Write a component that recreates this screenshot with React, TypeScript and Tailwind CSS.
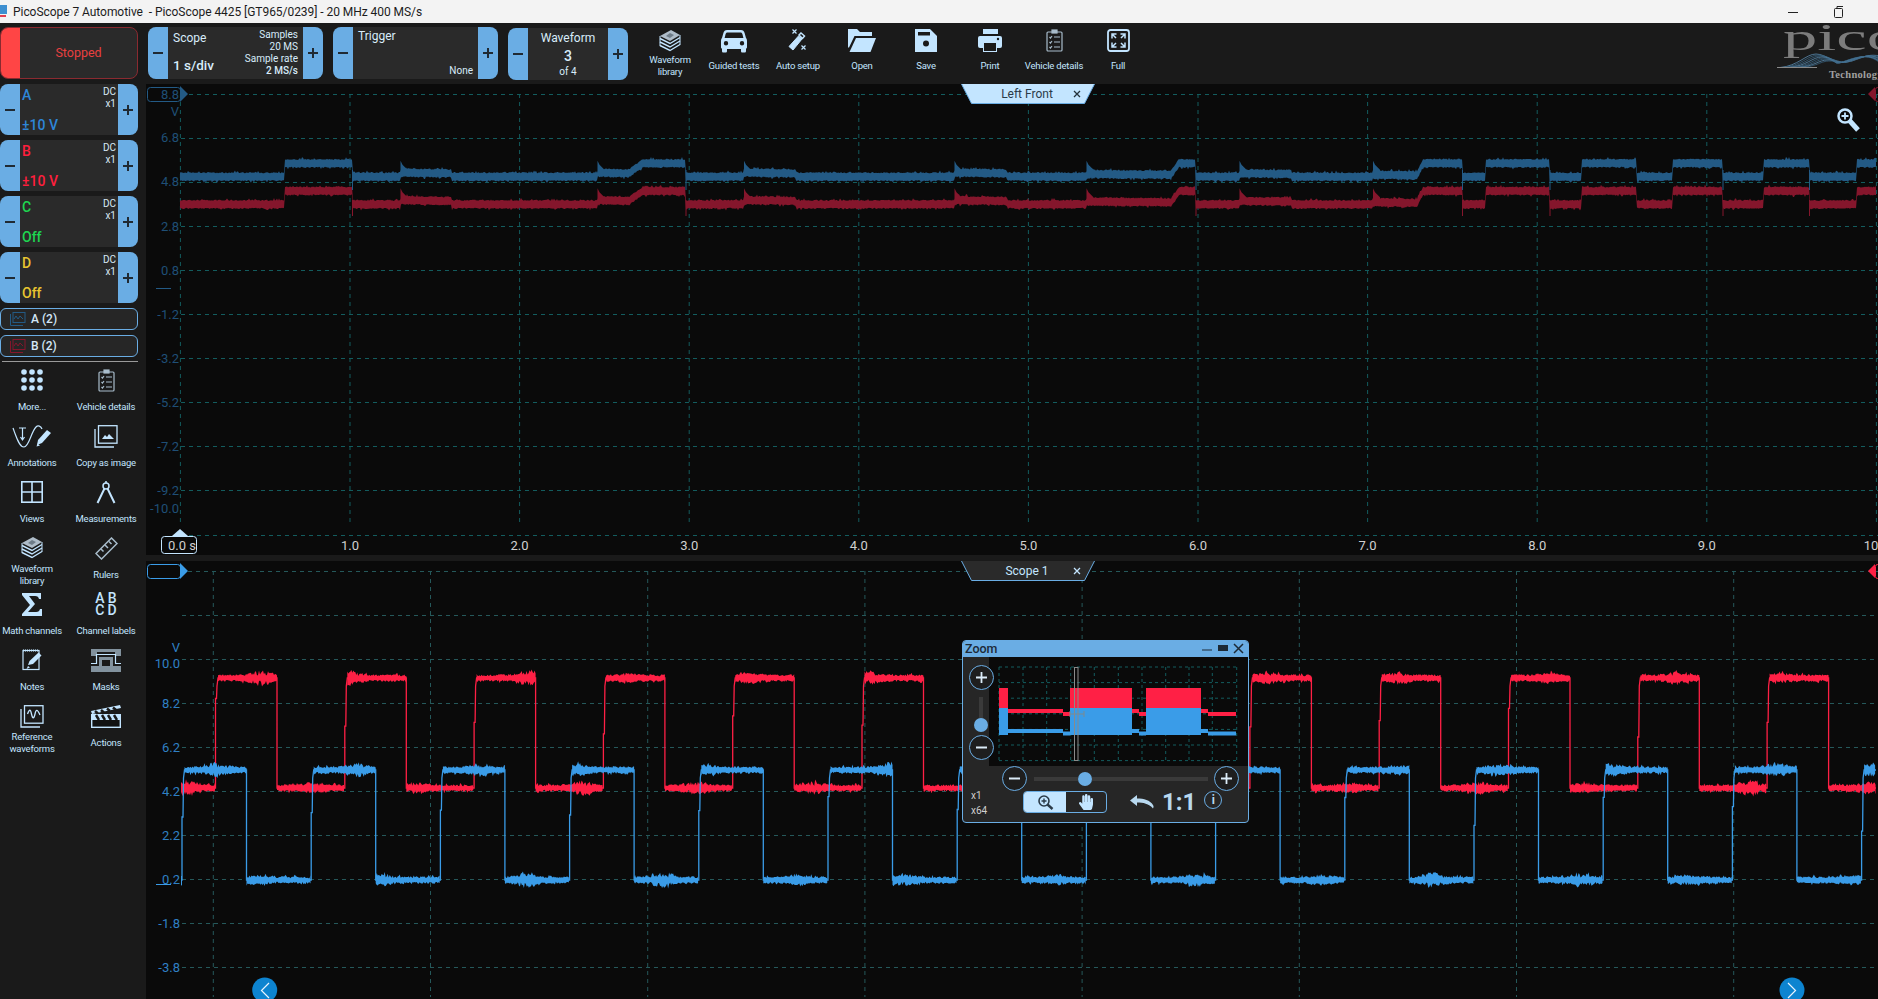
import type { ReactNode } from "react";
import { FaHandPaper } from "react-icons/fa";

const ICON = "#c3e5ff";
const PANEL = "#1a1a1a";

function rng(seed: number) {
  let s = seed;
  return () => {
    s = (s + 0x6d2b79f5) | 0;
    let t = Math.imul(s ^ (s >>> 15), 1 | s);
    t = (t + Math.imul(t ^ (t >>> 7), 61 | t)) ^ t;
    return ((t ^ (t >>> 14)) >>> 0) / 4294967296;
  };
}

/* top trace: x, offset (0 = low level, 1 = high level) */
const TOP_TRACE: [number, number][] = [
  [180, 0], [284, 0], [284.5, 1], [352, 1], [352.5, 0], [400, 0], [400.5, 0.3], [451, 0.25], [451.5, 0],
  [597, 0], [597.5, 0.3], [629, 0.25], [643, 1], [685.5, 1], [686, 0], [743.5, 0], [744, 0.3],
  [795, 0.25], [797, 0], [954, 0], [954.5, 0.3], [1006, 0.25], [1008, 0], [1086, 0], [1086.5, 0.2],
  [1171, 0.15], [1179, 1], [1195.5, 1], [1196, 0], [1239, 0], [1239.5, 0.25], [1291, 0.2], [1292, 0], [1372.5, 0],
  [1373, 0.15], [1417, 0.1], [1423, 1], [1462, 1], [1462.5, 0], [1485, 0], [1485.5, 1], [1549.5, 1], [1550, 0],
  [1581, 0], [1581.5, 1], [1636, 1], [1636.5, 0], [1672.5, 0], [1673, 1], [1722.5, 1], [1723, 0], [1763, 0], [1763.5, 1],
  [1809, 1], [1809.5, 0], [1856, 0], [1856.5, 1], [1876, 1],
];
const TOP_FALLS = [352.5, 686, 1196, 1462.5, 1550, 1723, 1809.5];
const TOP_SPIKES = [400.5, 597.5, 744, 954.5, 1086.5, 1239.5, 1373];

function levelAt(x: number) {
  for (let i = 1; i < TOP_TRACE.length; i++) {
    const [x0, y0] = TOP_TRACE[i - 1];
    const [x1, y1] = TOP_TRACE[i];
    if (x <= x1) return y0 + ((y1 - y0) * (x - x0)) / (x1 - x0);
  }
  return 0;
}

function topBand(baseY: number, seed: number) {
  const r = rng(seed);
  const up: string[] = [];
  const down: string[] = [];
  for (let x = 180; x <= 1876; x++) {
    const y = baseY - levelAt(x) * 13.4;
    const a = 3.4 + r() * 1.3 + (r() > 0.93 ? 1.6 : 0);
    const b = 3.4 + r() * 1.3 + (r() > 0.93 ? 1.6 : 0);
    up.push(`${x} ${(y - a).toFixed(1)}`);
    down.unshift(`${x} ${(y + b).toFixed(1)}`);
  }
  let spikes = "";
  for (const x of TOP_SPIKES) {
    spikes += `M${x} ${baseY - 4}L${x} ${baseY - 16}L${x + 2} ${baseY - 12}L${x + 7} ${baseY - 7}L${x + 7} ${baseY - 4}Z`;
  }
  return `M${up.join("L")}L${down.join("L")}Z${spikes}`;
}

function plateau(a: number, b: number, y: number, r: () => number) {
  const c = a + (b - a) * r();
  const amp = 2 + r() * 4;
  const up: string[] = [];
  const down: string[] = [];
  for (let x = a; x <= b; x++) {
    const burst = Math.exp(-((x - c) ** 2) / 160) * amp;
    const t = 1.8 + r() * 2 + burst * r() + (r() > 0.92 ? 1.6 : 0);
    const d = 1.8 + r() * 2 + burst * r() + (r() > 0.92 ? 1.6 : 0);
    up.push(`${x.toFixed(1)} ${(y - t).toFixed(1)}`);
    down.unshift(`${x.toFixed(1)} ${(y + d).toFixed(1)}`);
  }
  return `M${up.join("L")}L${down.join("L")}Z`;
}

function squareWave(first: number, period: number, width: number, hi: number, lo: number, seed: number) {
  const r = rng(seed);
  let line = `M181 ${lo}`;
  let bands = "";
  let prev = 181;
  for (let rise = first; rise < 1876; rise += period) {
    const fall = Math.min(rise + width, 1876);
    const kink = hi + 20 + r() * 45;
    line += `L${rise - 1.5} ${lo}L${rise - 1.5} ${kink.toFixed(1)}L${rise - 0.5} ${kink.toFixed(1)}L${rise} ${hi + 8}L${rise + 1} ${hi}L${fall} ${hi}`;
    if (fall < 1876) line += `L${fall} ${lo}`;
    bands += plateau(prev, rise - 1.5, lo, r);
    bands += plateau(rise + 1, fall, hi, r);
    prev = fall;
  }
  if (prev < 1876) {
    line += `L1876 ${lo}`;
    bands += plateau(prev, 1876, lo, r);
  }
  return { line, bands };
}

const BLUE_TOP = topBand(176.7, 11);
const RED_TOP = topBand(204.3, 29);
const RED_WAVE = squareWave(217, 129.3, 60, 678, 788, 7);
const BLUE_WAVE = squareWave(183.5, 129.2, 63, 770, 880, 42);

const TOP_Y = [94, 138, 182, 226, 270, 314, 358, 402, 446, 490, 535];
const TOP_LABELS: [string, number][] = [
  ["6.8", 142], ["4.8", 186], ["2.8", 231], ["0.8", 275], ["-1.2", 319], ["-3.2", 363],
  ["-5.2", 407], ["-7.2", 451], ["-9.2", 495], ["-10.0", 513],
];
const BOTTOM_Y = [571, 615, 659, 703, 747, 791, 835, 879, 923, 967];
const BOTTOM_LABELS: [string, number][] = [
  ["10.0", 668], ["8.2", 708], ["6.2", 752], ["4.2", 796], ["2.2", 840], ["0.2", 884], ["-1.8", 928], ["-3.8", 972],
];

function TopPlot() {
  const xs = Array.from({ length: 11 }, (_, i) => 180.4 + i * 169.6);
  return (
    <svg width={1732} height={471} viewBox="146 84 1732 471" className="block bg-[#0a0a0a]">
      {TOP_Y.map((y) => (
        <line key={y} x1={181} x2={1878} y1={y + 0.5} y2={y + 0.5} stroke="#135c5e" strokeDasharray="4 4" />
      ))}
      {xs.map((x) => (
        <line key={x} x1={x} x2={x} y1={94} y2={526} stroke="#135c5e" strokeDasharray="4 4" />
      ))}
      <path d={BLUE_TOP} fill="#235a85" />
      <path d={RED_TOP} fill="#85162c" />
      {TOP_FALLS.map((x) => (
        <g key={x}>
          <line x1={x} x2={x} y1={170} y2={190} stroke="#235a85" />
          <line x1={x} x2={x} y1={200} y2={216} stroke="#85162c" />
        </g>
      ))}
      <rect x={147.5} y={87.5} width={33} height={14} rx={3} fill="none" stroke="#235a85" />
      <polygon points="180,86 188,94 180,102" fill="#235a85" />
      <g fontSize={13} fill="#1f4f76" textAnchor="end">
        <text x={179} y={99}>8.8</text>
        <text x={179} y={116}>V</text>
        {TOP_LABELS.map(([t, y]) => (
          <text key={t} x={179} y={y}>{t}</text>
        ))}
      </g>
      <line x1={156} x2={171} y1={288.5} y2={288.5} stroke="#235a85" />
      <polygon points="172,536 180,529 188,536" fill={ICON} />
      <rect x={161.5} y={536.5} width={35} height={17} rx={3} fill="#0a0a0a" stroke={ICON} />
      <g fontSize={13} fill="#d0d0d0" textAnchor="middle">
        <text x={182} y={550}>0.0 s</text>
        {xs.slice(1).map((x, i) => (
          <text key={x} x={x} y={550}>{(i + 1).toFixed(1)}</text>
        ))}
      </g>
      <polygon points="1868,94 1875,87 1875,101" fill="#85162c" />
      <rect x={1875.5} y={87.5} width={8} height={14} rx={2} fill="none" stroke="#85162c" />
      <line x1={1849} y1={120} x2={1858} y2={130} stroke={ICON} strokeWidth={5} />
      <circle cx={1845} cy={116} r={6.5} fill="#0a0a0a" stroke={ICON} strokeWidth={2.5} />
      <path d="M1841.5 116h7M1845 112.5v7" stroke={ICON} strokeWidth={1.8} />
    </svg>
  );
}

function BottomPlot() {
  const xs = Array.from({ length: 8 }, (_, i) => 213.3 + i * 217.2);
  return (
    <svg width={1732} height={438} viewBox="146 561 1732 438" className="block bg-[#0a0a0a]">
      {BOTTOM_Y.map((y) => (
        <line key={y} x1={y === 571 ? 188 : 182} x2={1878} y1={y + 0.5} y2={y + 0.5} stroke="#25585a" strokeDasharray="4 4" />
      ))}
      {xs.map((x) => (
        <line key={x} x1={x} x2={x} y1={571} y2={997} stroke="#25585a" strokeDasharray="4 4" />
      ))}
      <path d={RED_WAVE.line} fill="none" stroke="#ff2045" strokeWidth={1.3} />
      <path d={RED_WAVE.bands} fill="#ff2045" />
      <path d={BLUE_WAVE.line} fill="none" stroke="#3a9ce8" strokeWidth={1.3} />
      <path d={BLUE_WAVE.bands} fill="#3a9ce8" />
      <rect x={147.5} y={564.5} width={33} height={14} rx={3} fill="#0a0a0a" stroke="#3a9ce8" />
      <polygon points="180,563 188,571 180,579" fill="#3a9ce8" />
      <g fontSize={13} fill="#2f80c4" textAnchor="end">
        <text x={180} y={652}>V</text>
        {BOTTOM_LABELS.map(([t, y]) => (
          <text key={t} x={180} y={y}>{t}</text>
        ))}
      </g>
      <line x1={156} x2={171} y1={884.5} y2={884.5} stroke="#3a9ce8" />
      <polygon points="1868,571 1875,564 1875,578" fill="#ff2045" />
      <rect x={1875.5} y={564.5} width={8} height={14} rx={2} fill="none" stroke="#ff2045" />
      {[264.7, 1792].map((x) => (
        <circle key={x} cx={x} cy={990} r={12.5} fill="#0d84d0" />
      ))}
      <path d="M269 983l-7.5 7.5 7.5 7.5" fill="none" stroke="#e8f4ff" strokeWidth={1.2} />
      <path d="M1788 983l7.5 7.5-7.5 7.5" fill="none" stroke="#e8f4ff" strokeWidth={1.2} />
    </svg>
  );
}

function MiniPlot() {
  const vs = [999, 1023, 1046.7, 1070.7, 1094.3, 1118.3, 1142, 1165.7, 1189, 1212.3, 1236.7];
  const hs = [667, 682.6, 698.2, 713.8, 729.4, 745, 760.6];
  const blocks = [[999, 1008], [1070, 1132], [1146, 1201]];
  const thin = [
    [1008, 1063, 0], [1063, 1070, 1], [1132, 1139, 0], [1139, 1146, 1], [1201, 1208, 0], [1208, 1236, 1],
  ];
  return (
    <svg width={259} height={109} viewBox="989 657 259 109" className="block bg-[#0a0a0a]">
      {hs.map((y) => (
        <line key={y} x1={999} x2={1237} y1={y} y2={y} stroke="#135c5e" strokeDasharray="3 3" />
      ))}
      {vs.map((x) => (
        <line key={x} x1={x} x2={x} y1={667} y2={761} stroke="#135c5e" strokeDasharray="3 3" />
      ))}
      {blocks.map(([a, b]) => (
        <g key={a}>
          <rect x={a} y={688} width={b - a} height={20} fill="#ff2045" />
          <rect x={a} y={708} width={b - a} height={27} fill="#3a9ce8" />
        </g>
      ))}
      {thin.map(([a, b, k]) => (
        <g key={a}>
          <rect x={a} y={709 + k * 3} width={b - a} height={4} fill="#ff2045" />
          <rect x={a} y={729 + k * 2.5} width={b - a} height={4} fill="#3a9ce8" />
        </g>
      ))}
      <path d="M1070 714h14M1070 711v6M1084 711v6" stroke="#7a8a90" />
      <rect x={1074.5} y={667.5} width={3.5} height={93} fill="none" stroke="#8a8a8a" />
    </svg>
  );
}

function Glyph({ kind }: { kind: "plus" | "minus" }) {
  return (
    <svg width={12} height={12} viewBox="0 0 12 12">
      <path d={kind === "plus" ? "M1 6h10M6 1v10" : "M1 6h10"} stroke="#202a33" strokeWidth={2} />
    </svg>
  );
}

function StepCard({
  children,
  className,
}: {
  children: ReactNode;
  className: string;
}) {
  return (
    <div className={`flex overflow-hidden rounded-lg bg-[#2a2a2a] ${className}`}>
      <div className="flex w-[20px] shrink-0 items-center justify-center bg-[#6aade4]">
        <Glyph kind="minus" />
      </div>
      <div className="min-w-0 flex-1">{children}</div>
      <div className="flex w-[20px] shrink-0 items-center justify-center bg-[#6aade4]">
        <Glyph kind="plus" />
      </div>
    </div>
  );
}

function ChannelCard({ name, value, color }: { name: string; value: string; color: string }) {
  return (
    <StepCard className="h-[51px] w-[138px]">
      <div className="flex h-full flex-col justify-between pl-[2px] pr-[2px]" style={{ color }}>
        <div className="flex justify-between">
          <span className="mt-[3px] text-[14px] font-medium leading-[16px]">{name}</span>
          <span className="mt-[2px] text-right text-[10px] leading-[12px] text-[#d8e8f4]">
            DC
            <br />
            x1
          </span>
        </div>
        <span className="mb-[1px] text-[14px] font-medium leading-[18px]">{value}</span>
      </div>
    </StepCard>
  );
}

function FilterRow({ label, color }: { label: string; color: string }) {
  return (
    <div className="flex h-[22px] w-[138px] items-center rounded-md border border-[#6aade4] bg-[#262626] pl-[9px]">
      <svg width={16} height={14} viewBox="0 0 16 14" fill="none" stroke={color}>
        <path d="M.5 2v11.5H13" />
        <rect x={3} y={.5} width={12} height={10} />
        <path d="M4 7l2-3 2 3 2-3 3 3" />
      </svg>
      <span className="ml-[5px] text-[12px] font-medium text-[#d4e8f8]">{label}</span>
    </div>
  );
}

function ToolButton({ icon, label, compact }: { icon: ReactNode; label: ReactNode; compact?: boolean }) {
  return (
    <div className="flex w-[64px] shrink-0 flex-col items-center">
      <div className={`flex items-center ${compact ? "h-[27px]" : "h-[30px]"}`}>{icon}</div>
      <div className="flex h-[24px] items-center whitespace-nowrap text-center text-[9.5px] leading-[12px] tracking-[-0.2px] text-[#c3e5ff]">
        <span>{label}</span>
      </div>
    </div>
  );
}

/* toolbar and side panel drawings */
function StackIcon() {
  return (
    <svg width={22} height={24} viewBox="0 0 22 24" fill="none" stroke={ICON} strokeWidth={1.4}>
      <path d="M12 1l9 5-10 6L1 7z" fill="#aebcc8" stroke="none" />
      <path d="M11 4l4 2-4 3-4-2z" fill="#6e7c88" stroke="none" />
      <path d="M1 9.5l10 5 10-6M1 13l10 5 10-6M1 16.5l10 5 10-6" />
      <path d="M1 7v10M21 6v10" strokeWidth={1} />
    </svg>
  );
}
function CarIcon() {
  return (
    <svg width={26} height={24} viewBox="0 0 26 24" fill={ICON}>
      <path
        fillRule="evenodd"
        d="M6 1h14c2 0 3 1 3.6 3l1.4 5c.6.5 1 1.6 1 3v6c0 1-.5 1.5-1 1.6V22c0 1-.6 1.6-1.5 1.6h-2c-1 0-1.5-.6-1.5-1.6v-2H6v2c0 1-.6 1.6-1.5 1.6h-2C1.6 23.6 1 23 1 22v-2.4c-.6-.1-1-.6-1-1.6v-6c0-1.4.4-2.5 1-3l1.4-5C3 2 4 1 6 1zM6.5 3.5c-1 0-1.6.5-1.9 1.6L3.6 9h18.8l-1-3.9c-.3-1.1-.9-1.6-1.9-1.6zM5 12a2.2 2.2 0 100 4.4A2.2 2.2 0 005 12zm16 0a2.2 2.2 0 100 4.4 2.2 2.2 0 000-4.4z"
      />
    </svg>
  );
}
function WandIcon() {
  return (
    <svg width={20} height={23} viewBox="0 0 20 23" fill="none" stroke={ICON}>
      <path d="M1 17.5L10.5 7l3.5 3L5 21z" fill={ICON} />
      <path d="M11 6l2-2 3.5 3-2 2.5z" strokeWidth={1.5} />
      <path d="M4.5 .5l4 4M8.5 .5l-4 4M13.500 16.500l4 4M17.500 16.500l-4 4" strokeWidth={1.2} />
    </svg>
  );
}
function FolderIcon() {
  return (
    <svg width={28} height={23} viewBox="0 0 28 23" fill={ICON}>
      <path d="M0 0h9l3 3h12v4H6.500L1 18.500H0z" />
      <path d="M8 9h20l-5.500 14H1.500z" />
    </svg>
  );
}
function SaveIcon() {
  return (
    <svg width={22} height={23} viewBox="0 0 22 23">
      <path d="M0 0h15l7 7v16H0z" fill={ICON} />
      <rect x={3} y={3} width={12} height={3.500} fill={PANEL} />
      <circle cx={11} cy={14.500} r={3} fill={PANEL} />
    </svg>
  );
}
function PrintIcon() {
  return (
    <svg width={24} height={23} viewBox="0 0 24 23">
      <rect x={5} y={0} width={15} height={5} fill={ICON} />
      <rect x={0} y={7} width={24} height={12} rx={2} fill={ICON} />
      <circle cx={20} cy={10} r={1.200} fill={PANEL} />
      <rect x={5.500} y={13.500} width={13} height={9} fill={PANEL} stroke={ICON} />
    </svg>
  );
}
function ClipboardIcon() {
  return (
    <svg width={17} height={23} viewBox="0 0 17 23" fill="none" stroke="#a8bccb" strokeWidth={1.200}>
      <rect x={1} y={3} width={15} height={19} rx={1} />
      <rect x={6} y={1} width={5} height={3} fill="#a8bccb" />
      <path d="M3.500 8l1 1 1.500-2M3.500 13l1 1 1.500-2M3.500 18l1 1 1.500-2M8 8h6M8 13h6M8 18h6" />
    </svg>
  );
}
function FullIcon() {
  return (
    <svg width={23} height={23} viewBox="0 0 23 23" fill="none" stroke={ICON}>
      <rect x={1} y={1} width={21} height={21} rx={2.500} strokeWidth={1.800} />
      <path d="M5 9.500V5h4.500M5 5l4 4M18 9.500V5h-4.500M18 5l-4 4M5 13.500V18h4.500M5 18l4-4M18 13.500V18h-4.500M18 18l-4-4" strokeWidth={1.500} />
    </svg>
  );
}
function DotsIcon() {
  return (
    <svg width={22} height={22} viewBox="0 0 22 22" fill={ICON}>
      {[3, 11, 19].flatMap((y) => [3, 11, 19].map((x) => <circle key={`${x}-${y}`} cx={x} cy={y} r={2.800} />))}
    </svg>
  );
}
function AnnotationsIcon() {
  return (
    <svg width={40} height={23} viewBox="0 0 40 23" fill="none" stroke={ICON}>
      <path d="M1 3c3 8 6 19 11 19S19 7 24 2c2-2 5-1 6 2" strokeWidth={1.200} />
      <path d="M7 3h7M10.500 3v12M8.500 12l2 3 2-3" strokeWidth={1.200} />
      <path d="M25 20l1-5 9-10 4 3-9 10z" fill={ICON} stroke="none" />
      <path d="M24.500 21.500l1-3 2.500 2z" fill={ICON} stroke="none" />
    </svg>
  );
}
function ImageIcon() {
  return (
    <svg width={24} height={23} viewBox="0 0 24 23" fill="none" stroke={ICON} strokeWidth={1.300}>
      <path d="M1 4v18h19" />
      <rect x={4.500} y={.700} width={18.500} height={17.500} />
      <path d="M8 14l3-4 2 2 2-3 5 5z" fill={ICON} stroke="none" />
    </svg>
  );
}
function ViewsIcon() {
  return (
    <svg width={22} height={22} viewBox="0 0 22 22" fill="none" stroke={ICON} strokeWidth={1.600}>
      <rect x={.800} y={.800} width={20.400} height={20.400} />
      <path d="M11 1v20M1 11h20" />
    </svg>
  );
}
function CompassIcon() {
  return (
    <svg width={20} height={23} viewBox="0 0 20 23" fill="none" stroke={ICON}>
      <circle cx={10} cy={5} r={3} strokeWidth={1.500} />
      <path d="M8.500 7.500L1.500 22M11.500 7.500l7 14.500" strokeWidth={2} />
      <path d="M10 0v2" strokeWidth={1.500} />
    </svg>
  );
}
function RulerIcon() {
  return (
    <svg width={23} height={23} viewBox="0 0 23 23" fill="none" stroke="#a8bccb" strokeWidth={1.500}>
      <path d="M1 16.500L16.500 1 22 6.500 6.500 22z" />
      <path d="M6 12l2.500 2.500M10 8l3 3M14 4.500l2.500 2.500" />
    </svg>
  );
}
function SigmaIcon() {
  return (
    <svg width={20} height={23} viewBox="0 0 20 23" fill={ICON}>
      <path d="M0 0h19v6h-2c-.5-2-1.500-3-4-3H7l6 8-7 8h8c2.500 0 3.500-1 4-3h2v7H0v-2l8-9L0 2z" />
    </svg>
  );
}
function NotesIcon() {
  return (
    <svg width={21} height={23} viewBox="0 0 21 23" fill="none" stroke={ICON}>
      <rect x={1} y={1.500} width={16} height={19} strokeWidth={1.200} />
      <path d="M1 1.500h16" strokeDasharray="1 1" strokeWidth={2} />
      <path d="M6 16l1.500-4 9-8.500 3 3L11 15z" fill={ICON} stroke="none" />
      <path d="M4.500 20l1.500-3 2 1.500z" fill={ICON} stroke="none" />
    </svg>
  );
}
function MasksIcon() {
  return (
    <svg width={30} height={23} viewBox="0 0 30 23" fill="#82929e">
      <path d="M0 0h30v7h-6V3H6v4H0z" />
      <path d="M0 23v-6h8V8h14v9h8v6z" />
      <path d="M0 14.500h5.500V5.500h19v9H30" fill="none" stroke={ICON} strokeWidth={1.200} />
      <rect x={11} y={11} width={8} height={6} fill={PANEL} />
    </svg>
  );
}
function RefWaveIcon() {
  return (
    <svg width={24} height={23} viewBox="0 0 24 23" fill="none" stroke={ICON} strokeWidth={1.300}>
      <path d="M1 4v18h19" />
      <rect x={4.500} y={.700} width={18.500} height={17.500} />
      <path d="M7.500 9c2-5 3-5 4 0s2.500 5 3.500 0 2.500-5 5 1" />
    </svg>
  );
}
function ClapperIcon() {
  return (
    <svg width={30} height={23} viewBox="0 0 30 23">
      <path d="M0 6L29 0l1 3L1 9z" fill={ICON} />
      <path d="M4 6l3 2.500M10 5l3 2.500M16 3.500l3 2.500M22 2.500l3 2.500" stroke={PANEL} strokeWidth={2.500} />
      <rect x={.700} y={9.700} width={28.600} height={12.600} fill="#121212" stroke={ICON} strokeWidth={1.400} />
      <rect x={1} y={10} width={28} height={5} fill={ICON} />
      <path d="M5 10l3 5M11 10l3 5M17 10l3 5M23 10l3 5" stroke={PANEL} strokeWidth={2.500} />
    </svg>
  );
}

function Logo() {
  return (
    <svg width={110} height={61} viewBox="1768 23 110 61" className="-mt-[4px] ml-auto shrink-0">
      <text x={1783} y={50} fontSize={38} fill="#7c7c7c" textLength={118} lengthAdjust="spacingAndGlyphs" className="font-['Liberation_Serif']">
        pico
      </text>
      {[0, 1, 2, 3, 4, 5, 6, 7].map((i) => (
        <path
          key={i}
          d={`M${1780 + i * 3} 67.500C${1798 + i * 3} 66 ${1806 + i * 2} ${54 + i} ${1816 + i * 2} ${54 + i}S${1838 - i} 66 ${1852 - i} 61S${1870} 54 1880 ${56 + i}`}
          fill="none"
          stroke={i % 3 === 0 ? "#5a8cb0" : "#37617f"}
          strokeWidth={0.800}
        />
      ))}
      <path d="M1777 67.500h40" stroke="#8a8a8a" strokeWidth={1} />
      <text x={1829} y={78} fontSize={10.500} fontWeight={700} fill="#a0a0a0" letterSpacing={0.300} className="font-['Liberation_Serif']">
        Technology
      </text>
    </svg>
  );
}

function Tab({ label, active }: { label: string; active: boolean }) {
  return (
    <div className="absolute left-[815px] top-0 flex h-[20px] w-[134px] items-center">
      <svg width={134} height={20} viewBox="0 0 134 20" className="absolute inset-0">
        <path
          d="M.5 0L10.500 19.500H123.500L133.500 0"
          fill={active ? ICON : "#2a2a2a"}
          stroke="#6aade4"
        />
      </svg>
      <span className={`relative ml-[17px] w-[98px] text-center text-[12px] ${active ? "text-[#2a3a48]" : "text-[#c3e5ff]"}`}>
        {label}
      </span>
      <svg width={8} height={8} viewBox="0 0 8 8" className="relative -ml-[3px]">
        <path d="M1 1l6 6M7 1L1 7" stroke={active ? "#25323c" : ICON} strokeWidth={1.300} />
      </svg>
    </div>
  );
}

function RoundButton({ kind }: { kind: "plus" | "minus" }) {
  return (
    <div className="flex h-[25px] w-[25px] shrink-0 items-center justify-center rounded-full border border-[#6aade4] bg-[#1e1e1e]">
      <svg width={11} height={11} viewBox="0 0 11 11">
        <path d={kind === "plus" ? "M0 5.500h11M5.500 0v11" : "M0 5.500h11"} stroke="#dcecf8" strokeWidth={1.800} />
      </svg>
    </div>
  );
}

function ZoomWindow() {
  return (
    <div className="absolute left-[816px] top-[79px] h-[183px] w-[287px] overflow-hidden rounded-[4px] border border-[#6aade4] bg-[#262626]">
      {/* title */}
      <div className="flex h-[16px] items-center bg-[#6aade4] pl-[2px]">
        <span className="text-[12.500px] font-medium leading-[16px] text-[#1d2a36]">Zoom</span>
        <svg width={44} height={12} viewBox="0 0 44 12" className="ml-auto mr-[2px]">
          <path d="M0 7h10" stroke="#1d2a36" strokeWidth={1.200} />
          <rect x={16} y={2} width={10} height={6} fill="#1d2a36" />
          <path d="M32 1l9 9M41 1l-9 9" stroke="#1d2a36" strokeWidth={1.500} />
        </svg>
      </div>
      {/* plot and vertical slider */}
      <div className="flex h-[109px]">
        <div className="relative z-10 -mr-[10px] flex w-[36px] shrink-0 flex-col items-center pt-[8px]">
          <RoundButton kind="plus" />
          <div className="mt-[7px] h-[22px] w-[4px] bg-[#3a3a3a]" />
          <div className="-mt-[1px] h-[14px] w-[14px] rounded-full bg-[#6aade4]" />
          <div className="mt-[3px]">
            <RoundButton kind="minus" />
          </div>
        </div>
        <MiniPlot />
      </div>
      {/* horizontal slider */}
      <div className="flex h-[25px] items-center pl-[39px]">
        <RoundButton kind="minus" />
        <div className="ml-[7px] h-[4px] w-[44px] bg-[#3a3a3a]" />
        <div className="h-[14px] w-[14px] rounded-full bg-[#6aade4]" />
        <div className="h-[4px] w-[116px] bg-[#3a3a3a]" />
        <div className="ml-[6px]">
          <RoundButton kind="plus" />
        </div>
      </div>
      {/* bottom row */}
      <div className="flex items-start pl-[8px]">
        <div className="-mt-[3px] w-[52px] text-[10px] leading-[15px] text-[#cfcfcf]">
          <div>x1</div>
          <div>x64</div>
        </div>
        <div className="flex h-[22px] w-[84px] overflow-hidden rounded border border-[#6aade4]">
          <div className="flex w-[42px] items-center justify-center bg-[#c3e5ff]">
            <svg width={17} height={17} viewBox="0 0 17 17" fill="none" stroke="#2a3a48">
              <circle cx={7} cy={7} r={5} strokeWidth={1.600} />
              <path d="M4.500 7h5M7 4.500v5" strokeWidth={1.400} />
              <path d="M10.500 10.500l5 4.500" strokeWidth={2.400} />
            </svg>
          </div>
          <div className="flex flex-1 items-center justify-center">
            <FaHandPaper size={16} color={ICON} />
          </div>
        </div>
        <svg width={26} height={14} viewBox="0 0 26 14" className="ml-[23px] mt-[4px]">
          <path d="M7 0L0 5.500 7 11V7.500c6 0 12 1 16 6 1-2 .500-2.500 0-3.500-3-5-9-6.500-16-6.500z" fill="#b8d8ef" />
        </svg>
        <span className="ml-[6px] text-[24px] font-bold leading-[22px] text-[#b8d8ef]">1:1</span>
        <div className="ml-[8px] flex h-[18px] w-[18px] items-center justify-center rounded-full border-[1.500px] border-[#6aade4] text-[12px] font-bold leading-none text-[#b8d8ef]">
          i
        </div>
      </div>
    </div>
  );
}

export default function App() {
  return (
    <div className="flex h-[999px] w-[1878px] flex-col overflow-hidden bg-[#1a1a1a] font-[Roboto,sans-serif]">
      {/* Title bar */}
      <div className="flex h-[23px] shrink-0 items-center bg-[#f3f3f3]">
        <svg width={8} height={14} viewBox="0 0 8 14">
          <rect x={0} y={0} width={7} height={9} fill="#3d8fd0" />
          <rect x={0} y={10} width={6} height={2} fill="#e04050" />
        </svg>
        <span className="ml-[5px] whitespace-pre text-[12px] tracking-[-0.05px] text-[#1c1c1c]">
          PicoScope 7 Automotive  - PicoScope 4425 [GT965/0239] - 20 MHz 400 MS/s
        </span>
        <svg width={55} height={12} viewBox="0 0 55 12" className="ml-auto mr-[35px]">
          <path d="M0 6.500h10" stroke="#222" />
          <rect x={46.500} y={2.500} width={8} height={9} rx={1} fill="none" stroke="#222" />
          <path d="M49 2V.500h7V8" fill="none" stroke="#222" />
        </svg>
      </div>

      {/* Toolbar */}
      <div className="flex h-[61px] shrink-0 items-start overflow-hidden bg-[#1a1a1a] pt-[4px]">
        <div className="flex h-[52px] w-[138px] shrink-0 overflow-hidden rounded-lg border border-[#8a2a30] bg-[#2a2a2a]">
          <div className="w-[19px] bg-[#ff4545]" />
          <div className="flex flex-1 items-center justify-center pt-[1px] text-[12.500px] text-[#e84040]">Stopped</div>
        </div>

        <StepCard className="ml-[10px] h-[52px] w-[175px]">
          <div className="flex h-full justify-between pl-[5px] pr-[5px]">
            <div className="flex flex-col justify-between pb-[5px] pt-[2px] text-[#d8ecfa]">
              <span className="text-[12px] leading-[18px]">Scope</span>
              <span className="text-[13.500px] font-medium leading-[18px]">1 s/div</span>
            </div>
            <div className="pt-[2px] text-right text-[10px] leading-[12px] text-[#d8ecfa]">
              <div>Samples</div>
              <div>20 MS</div>
              <div>Sample rate</div>
              <div className="font-medium">2 MS/s</div>
            </div>
          </div>
        </StepCard>

        <StepCard className="ml-[10px] h-[52px] w-[165px]">
          <div className="flex h-full flex-col justify-between pl-[5px] pr-[5px] text-[#d8ecfa]">
            <span className="text-[12px] leading-[18px]">Trigger</span>
            <span className="pb-[1px] text-right text-[10px] leading-[14px]">None</span>
          </div>
        </StepCard>

        <StepCard className="ml-[10px] mt-[1px] h-[52px] w-[120px]">
          <div className="flex h-full flex-col items-center pt-[1px] text-[#d8ecfa]">
            <span className="text-[12px] leading-[18px]">Waveform</span>
            <span className="text-[14px] font-medium leading-[18px]">3</span>
            <span className="text-[10px] leading-[14px]">of 4</span>
          </div>
        </StepCard>

        <div className="ml-[10px] flex">
          <ToolButton compact icon={<StackIcon />} label={<>Waveform<br />library</>} />
          <ToolButton compact icon={<CarIcon />} label="Guided tests" />
          <ToolButton compact icon={<WandIcon />} label="Auto setup" />
          <ToolButton compact icon={<FolderIcon />} label="Open" />
          <ToolButton compact icon={<SaveIcon />} label="Save" />
          <ToolButton compact icon={<PrintIcon />} label="Print" />
          <ToolButton compact icon={<ClipboardIcon />} label="Vehicle details" />
          <ToolButton compact icon={<FullIcon />} label="Full" />
        </div>

        <Logo />
      </div>

      {/* Body */}
      <div className="flex min-h-0 flex-1">
        <div className="w-[146px] shrink-0 bg-[#1a1a1a]">
          <div className="flex flex-col gap-[5px]">
            <ChannelCard name="A" value="±10 V" color="#2e86d8" />
            <ChannelCard name="B" value="±10 V" color="#ff1f3d" />
            <ChannelCard name="C" value="Off" color="#1ed650" />
            <ChannelCard name="D" value="Off" color="#e8c530" />
            <FilterRow label="A (2)" color="#235a85" />
            <FilterRow label="B (2)" color="#85162c" />
          </div>
          <div className="ml-[2px] mt-[4px] h-px w-[136px] bg-[#9a9a9a]" />
          <div className="mt-[3px] grid grid-cols-[64px_84px] grid-rows-[repeat(7,56px)]">
            {(
              [
                [<DotsIcon />, "More..."],
                [<ClipboardIcon />, "Vehicle details"],
                [<AnnotationsIcon />, "Annotations"],
                [<ImageIcon />, "Copy as image"],
                [<ViewsIcon />, "Views"],
                [<CompassIcon />, "Measurements"],
                [<StackIcon />, <>Waveform<br />library</>],
                [<RulerIcon />, "Rulers"],
                [<SigmaIcon />, "Math channels"],
                [
                  <div className="grid grid-cols-2 gap-x-[3px] text-center text-[14px] font-medium leading-[12px] text-[#c3e5ff]">
                    <span>A</span><span>B</span><span>C</span><span>D</span>
                  </div>,
                  "Channel labels",
                ],
                [<NotesIcon />, "Notes"],
                [<MasksIcon />, "Masks"],
                [<RefWaveIcon />, <>Reference<br />waveforms</>],
                [<ClapperIcon />, "Actions"],
              ] as [ReactNode, ReactNode][]
            ).map(([icon, label], i) => (
              <div key={i} className="flex justify-center">
                <ToolButton icon={icon} label={label} />
              </div>
            ))}
          </div>
        </div>

        <div className="flex min-w-0 flex-1 flex-col">
          <div className="relative h-[471px] shrink-0">
            <TopPlot />
            <Tab label="Left Front" active />
          </div>
          <div className="h-[6px] shrink-0 bg-[#1a1a1a]" />
          <div className="relative h-[438px] shrink-0">
            <BottomPlot />
            <Tab label="Scope 1" active={false} />
            <ZoomWindow />
          </div>
        </div>
      </div>
    </div>
  );
}
